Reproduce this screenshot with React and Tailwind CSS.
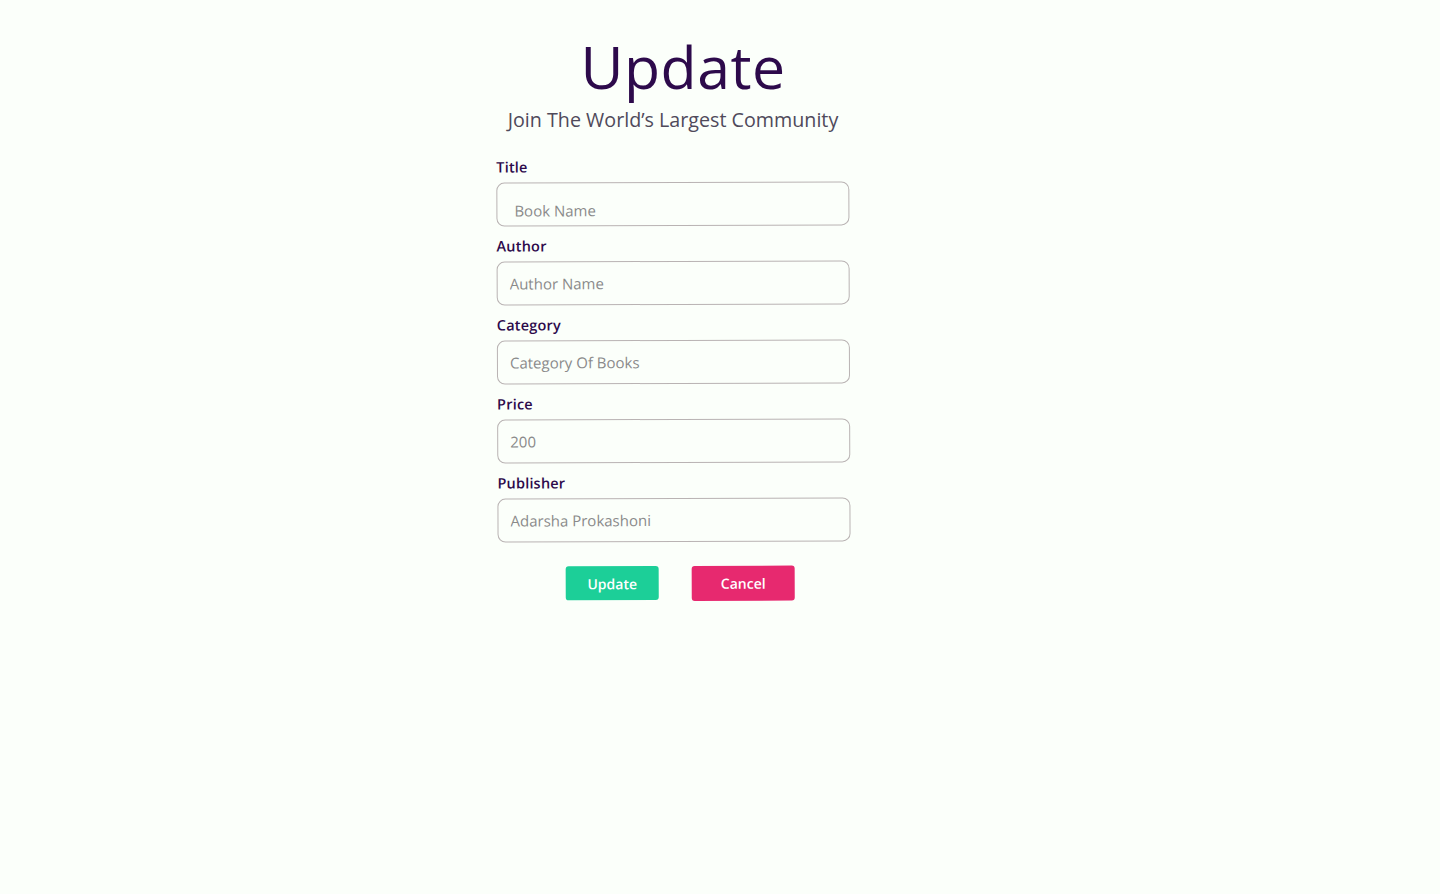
import React from "react";

const fields = [
  { label: "Title", placeholder: "Book Name", special: true },
  { label: "Author", placeholder: "Author Name" },
  { label: "Category", placeholder: "Category Of Books" },
  { label: "Price", placeholder: "200" },
  { label: "Publisher", placeholder: "Adarsha Prokashoni" },
];

export default function App() {
  return (
    <div
      className="min-h-[894px] w-full bg-[#fbfffa] pr-[94px] flex flex-col items-center"
      style={{ fontFamily: '"Open Sans", "Noto Sans", sans-serif' }}
    >
      <h1 className="mt-[30px] ml-[20px] text-[59px] leading-[72px] font-medium text-[#2d0a4b] tracking-[0.5px]">
        Update
      </h1>
      <p className="mt-[4px] text-[19.7px] leading-[28px] text-[#4f4a5a]">
        Join The World’s Largest Community
      </p>
      <form className="mt-[23px] w-[353px] flex flex-col -rotate-[0.2deg]">
        {fields.map((f, i) => (
          <div key={f.label} className={i === 0 ? "" : "mt-[10px]"}>
            <label className="block text-[14.5px] leading-[20px] font-semibold text-[#2d0a4b] tracking-[0.2px]">
              {f.label}
            </label>
            <input
              type="text"
              placeholder={f.placeholder}
              className={
                "mt-[5px] block w-full h-[44px] rounded-[8px] border border-[#b9b3b3] bg-transparent text-[15px] placeholder:text-[#8a8a8a] outline-none " +
                (f.special ? "pl-[17px] pt-[12px]" : "pl-[12px]")
              }
            />
          </div>
        ))}
        <div className="mt-[24px] flex justify-center gap-[33px] ml-[12px]">
          <button
            type="button"
            className="w-[93px] h-[34px] rounded-[3px] bg-[#1ccf98] text-white text-[14px] font-semibold"
          >
            Update
          </button>
          <button
            type="button"
            className="w-[103px] h-[35px] rounded-[3px] bg-[#e7296f] text-white text-[14px] font-semibold"
          >
            Cancel
          </button>
        </div>
      </form>
    </div>
  );
}
